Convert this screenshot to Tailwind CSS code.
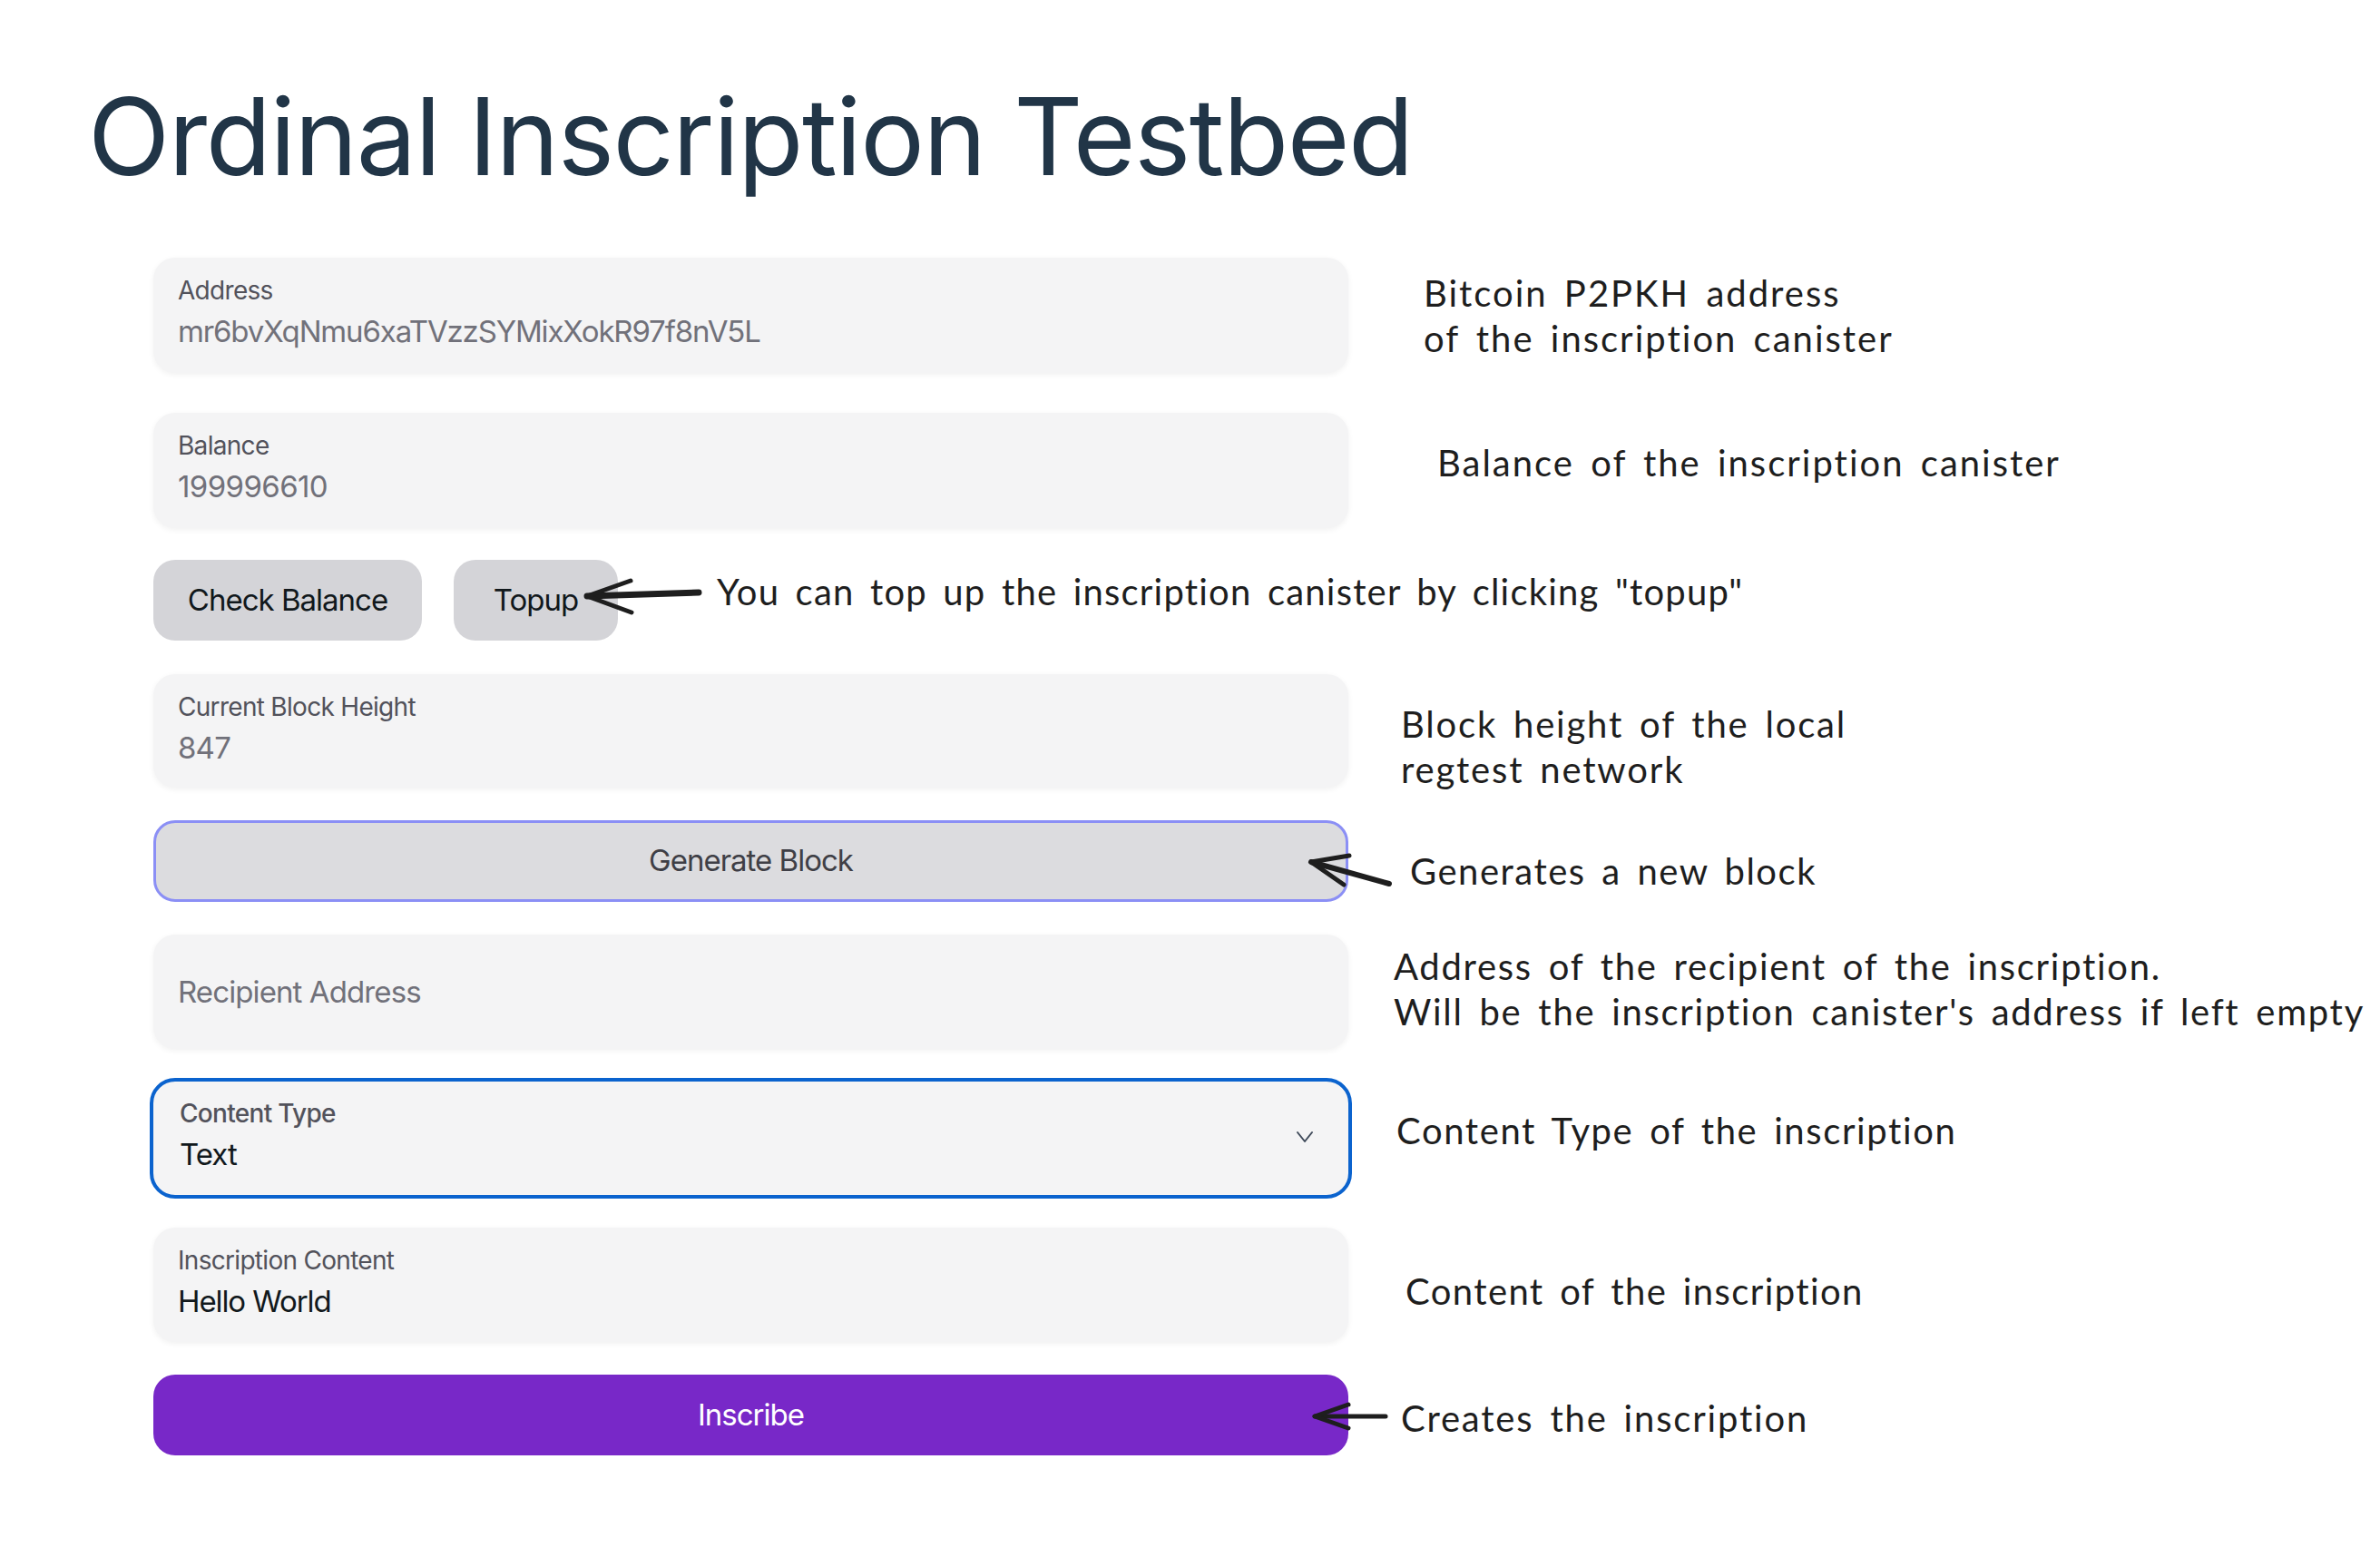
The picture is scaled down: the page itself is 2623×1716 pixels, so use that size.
<!DOCTYPE html>
<html lang="en">
<head>
    <meta charset="UTF-8">
    <meta name="viewport" content="width=device-width, initial-scale=1.0">
    <title>Ordinal Inscription Testbed</title>
    <script src="https://cdn.jsdelivr.net/npm/@tailwindcss/browser@4"></script>
</head>
<body class="bg-white font-['Inter',sans-serif]">
    <div class="relative w-[2623px] h-[1716px] overflow-hidden">
        <h1 class="pl-[97px] pt-[79px] h-[284px] text-[118px] leading-[142px] tracking-[-1.5px] font-normal text-[#213547]">Ordinal Inscription Testbed</h1>

        <div class="pl-[169px] flex flex-col">
            <!-- Address -->
            <div class="flex items-start h-[127px] mb-[44px]">
                <div class="w-[1317px] h-[127px] shrink-0 bg-[#f4f4f5] rounded-[24px] shadow-[0_2px_6px_rgba(0,0,0,0.06)] px-[27px] pt-[16px]">
                    <div class="text-[28px] leading-[41px] tracking-[-0.7px] text-[#52525b]">Address</div>
                    <div class="text-[33px] leading-[48px] tracking-[-1.15px] text-[#71717a]">mr6bvXqNmu6xaTVzzSYMixXokR97f8nV5L</div>
                </div>
                <div class="ml-[83px] mt-[14px] font-['Lato',sans-serif] text-[40px] leading-[50px] tracking-[2px] [word-spacing:6px] text-[#1e1e1e] whitespace-nowrap">Bitcoin P2PKH address<br>of the inscription canister</div>
            </div>

            <!-- Balance -->
            <div class="flex items-start h-[127px] mb-[35px]">
                <div class="w-[1317px] h-[127px] shrink-0 bg-[#f4f4f5] rounded-[24px] shadow-[0_2px_6px_rgba(0,0,0,0.06)] px-[27px] pt-[16px]">
                    <div class="text-[28px] leading-[41px] tracking-[-0.7px] text-[#52525b]">Balance</div>
                    <div class="text-[33px] leading-[48px] tracking-[-0.6px] text-[#71717a]">199996610</div>
                </div>
                <div class="ml-[98px] mt-[30px] font-['Lato',sans-serif] text-[40px] leading-[50px] tracking-[2px] [word-spacing:6px] text-[#1e1e1e] whitespace-nowrap">Balance of the inscription canister</div>
            </div>

            <!-- Buttons -->
            <div class="relative flex items-start h-[89px] mb-[37px]">
                <button class="w-[296px] h-[89px] bg-[#d4d4d8] rounded-[24px] text-[33px] tracking-[-1px] text-[#11181c]">Check Balance</button>
                <button class="ml-[35px] w-[181px] h-[89px] bg-[#d4d4d8] rounded-[24px] text-[33px] tracking-[-1px] text-[#11181c]">Topup</button>
                <div class="ml-[109px] mt-[10px] font-['Lato',sans-serif] text-[40px] leading-[50px] tracking-[1.2px] [word-spacing:6px] text-[#1e1e1e] whitespace-nowrap">You can top up the inscription canister by clicking "topup"</div>
                <svg class="absolute left-[472px] top-[15px]" width="135" height="60" viewBox="0 0 135 60" fill="none" stroke="#1e1e1e" stroke-linecap="round" stroke-linejoin="round">
                    <path d="M129 21 L6 25" stroke-width="7"/>
                    <path d="M54 8 L6 25 L55 43" stroke-width="5"/>
                </svg>
            </div>

            <!-- Block height -->
            <div class="flex items-start h-[125px] mb-[36px]">
                <div class="w-[1317px] h-[125px] shrink-0 bg-[#f4f4f5] rounded-[24px] shadow-[0_2px_6px_rgba(0,0,0,0.06)] px-[27px] pt-[16px]">
                    <div class="text-[28px] leading-[41px] tracking-[-0.7px] text-[#52525b]">Current Block Height</div>
                    <div class="text-[33px] leading-[48px] tracking-[-0.8px] text-[#71717a]">847</div>
                </div>
                <div class="ml-[58px] mt-[30px] font-['Lato',sans-serif] text-[40px] leading-[50px] tracking-[1.8px] [word-spacing:6px] text-[#1e1e1e] whitespace-nowrap">Block height of the local<br>regtest network</div>
            </div>

            <!-- Generate -->
            <div class="relative flex items-start h-[90px] mb-[36px]">
                <button class="w-[1317px] h-[90px] shrink-0 bg-[#dcdcdf] border-[3px] border-[#8b8ff5] rounded-[24px] text-[33px] tracking-[-1px] text-[#3f3f46]">Generate Block</button>
                <div class="ml-[68px] mt-[31px] font-['Lato',sans-serif] text-[40px] leading-[50px] tracking-[1.5px] [word-spacing:6px] text-[#1e1e1e] whitespace-nowrap">Generates a new block</div>
                <svg class="absolute left-[1270px] top-[33px]" width="100" height="45" viewBox="0 0 100 45" fill="none" stroke="#1e1e1e" stroke-linecap="round" stroke-linejoin="round">
                    <path d="M92 37 L6 13" stroke-width="6"/>
                    <path d="M48 6 L6 13 L42 38" stroke-width="5"/>
                </svg>
            </div>

            <!-- Recipient -->
            <div class="flex items-start h-[126px] mb-[32px]">
                <div class="flex items-center w-[1317px] h-[126px] shrink-0 bg-[#f4f4f5] rounded-[24px] shadow-[0_2px_6px_rgba(0,0,0,0.06)] px-[27px]">
                    <div class="text-[33px] leading-[48px] tracking-[-0.9px] text-[#71717a]">Recipient Address</div>
                </div>
                <div class="ml-[50px] mt-[10px] font-['Lato',sans-serif] text-[40px] leading-[50px] tracking-[1.7px] [word-spacing:6px] text-[#1e1e1e] whitespace-nowrap">Address of the recipient of the inscription.<br>Will be the inscription canister's address if left empty</div>
            </div>

            <!-- Content type -->
            <div class="flex items-start h-[133px] mb-[32px] -ml-[4px]">
                <div class="flex items-center justify-between w-[1325px] h-[133px] shrink-0 bg-[#f4f4f5] border-[4px] border-[#0b63ce] rounded-[28px] pl-[29px] pr-[36px]">
                    <div class="-mt-[8px]">
                        <div class="text-[28px] leading-[42px] tracking-[-0.7px] text-[#52525b] font-medium">Content Type</div>
                        <div class="text-[33px] leading-[48px] tracking-[-1px] text-[#11181c]">Text</div>
                    </div>
                    <svg class="-mt-[6px]" width="24" height="24" viewBox="0 0 24 24" fill="none" stroke="#3f4a5a" stroke-width="2" stroke-linecap="round" stroke-linejoin="round"><path d="M4 8 L12 18 L20 8"/></svg>
                </div>
                <div class="ml-[49px] mt-[33px] font-['Lato',sans-serif] text-[40px] leading-[50px] tracking-[1.6px] [word-spacing:6px] text-[#1e1e1e] whitespace-nowrap">Content Type of the inscription</div>
            </div>

            <!-- Inscription content -->
            <div class="flex items-start h-[126px] mb-[36px]">
                <div class="w-[1317px] h-[126px] shrink-0 bg-[#f4f4f5] rounded-[24px] shadow-[0_2px_6px_rgba(0,0,0,0.06)] px-[27px] pt-[16px]">
                    <div class="text-[28px] leading-[41px] tracking-[-0.7px] text-[#52525b]">Inscription Content</div>
                    <div class="text-[33px] leading-[48px] tracking-[-1.1px] text-[#11181c]">Hello World</div>
                </div>
                <div class="ml-[63px] mt-[45px] font-['Lato',sans-serif] text-[40px] leading-[50px] tracking-[1.4px] [word-spacing:6px] text-[#1e1e1e] whitespace-nowrap">Content of the inscription</div>
            </div>

            <!-- Inscribe -->
            <div class="relative flex items-start h-[89px]">
                <button class="w-[1317px] h-[89px] shrink-0 bg-[#7828c8] rounded-[24px] text-[33px] tracking-[-1px] text-white">Inscribe</button>
                <div class="ml-[58px] mt-[23px] font-['Lato',sans-serif] text-[40px] leading-[50px] tracking-[1.8px] [word-spacing:6px] text-[#1e1e1e] whitespace-nowrap">Creates the inscription</div>
                <svg class="absolute left-[1270px] top-[23px]" width="100" height="40" viewBox="0 0 100 40" fill="none" stroke="#1e1e1e" stroke-linecap="round" stroke-linejoin="round">
                    <path d="M88 23 L10 23" stroke-width="5"/>
                    <path d="M47 10 L10 23 L47 36" stroke-width="5"/>
                </svg>
            </div>
        </div>
    </div>
</body>
</html>
